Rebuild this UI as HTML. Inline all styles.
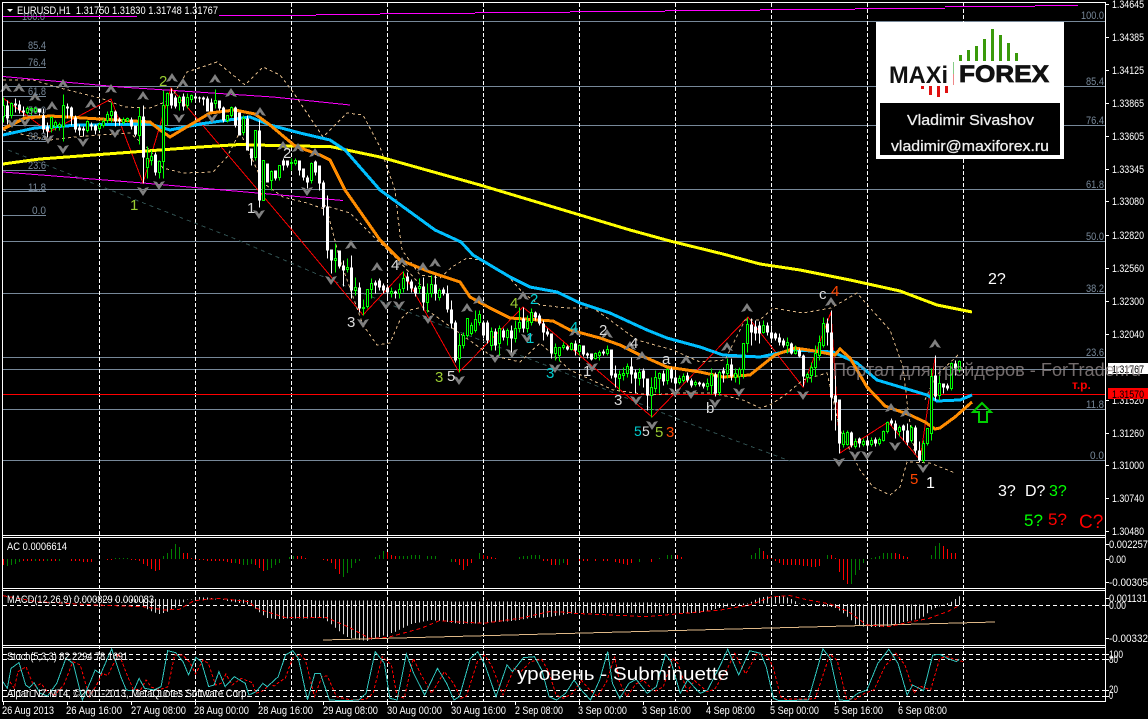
<!DOCTYPE html>
<html><head><meta charset="utf-8"><title>EURUSD,H1</title>
<style>
html,body{margin:0;padding:0;background:#000;width:1148px;height:719px;overflow:hidden}
svg{display:block}
text{font-family:"Liberation Sans","Noto Sans CJK SC",sans-serif;white-space:pre}
.ax{font-size:11px;fill:#fff}
.fb{font-size:11px;fill:#778899}
.w{font-size:15px}
.n path{vector-effect:non-scaling-stroke}
</style></head><body>
<svg width="1148" height="719" viewBox="0 0 1148 719" xmlns="http://www.w3.org/2000/svg">
<defs>
<path id="u" d="M0-5 6 4 2 3 0 0-2 3-6 4Z" fill="#808080"/>
<path id="d" d="M0 5 6-4 2-3 0 0-2-3-6-4Z" fill="#808080"/>
<pattern id="st" x="3" y="0" width="4" height="10" patternUnits="userSpaceOnUse"><rect width="1" height="10" fill="#d8d8d8"/></pattern>
</defs>
<rect width="1148" height="719" fill="#000"/>

<!-- horizontal levels -->
<g shape-rendering="crispEdges">
<path stroke="#778899" fill="none" d="M3 21.5H1105M3 86.5H1105M3 125.5H1105M3 189.5H1105M3 241.5H1105M3 293.5H1105M3 357.5H1105M3 369.5H1105M3 409.5H1105M3 460.5H1105M3 50.5H46M3 67.5H46M3 96.5H46M3 115.5H46M3 141.5H46M3 170.5H46M3 191.5H46M3 215.5H46"/>
<path stroke="#fff" stroke-dasharray="4 2" fill="none" d="M99.5 3V701M195.5 3V701M291.5 3V701M387.5 3V701M483.5 3V701M579.5 3V701M675.5 3V701M771.5 3V701M867.5 3V701M963.5 3V701"/>
<path stroke="#f00" fill="none" d="M3 394.5H1105"/>
<path stroke="#f0f" fill="none" stroke-width="1" d="M3 16.5H137M219 15.5H316M316 14.5H380M380 13.5H475M475 12.5H570M570 11.5H665M665 10.5H760M760 9.5H855M855 8.5H945M945 6.5H1035M1035 5.5H1078"/>
<polyline fill="none" stroke="#f0f" points="3,76.5 120,87 273,97 350,105"/>
<polyline fill="none" stroke="#f0f" points="3,172 143,183 343,200.5"/>
<polyline fill="none" stroke="#2f4f4f" stroke-dasharray="4 4" points="8,150 233,238 291,263 331,280 423,318 553,368 680,420 790,461"/>
<polyline fill="none" stroke="#f00" points="3,98 49,132 111,99 143,183 171,88 292,230 363,315 403,272 459,372 523,307 652,417 748,317 803,387 831,312 840,453 888,422 920,460 935,358"/>
<!-- bands -->
<g fill="none" stroke="#deb887" stroke-dasharray="3 3">
<polyline points="3,80 33,80 60,88 100,98 125,107 150,108 170,100 187,72 217,62 233,75 245,85 263,67 280,75 293,92 323,137 347,113 363,115 380,147 395,190 400,235 402,250 420,275 440,278 452,267 467,258 480,260 507,275 523,293 540,305 567,308 593,308 610,320 637,340 673,350 700,362 725,360 745,320 760,320 773,308 803,313 831,308 857,293 870,308 890,330 903,367 908,410 915,455"/>
<polyline points="3,130 25,135 50,140 75,137 100,135 130,133 150,150 163,168 183,173 213,172 227,157 240,132 263,183 283,197 307,203 327,210 340,260 363,325 377,345 390,343 400,320 410,310 423,307 455,330 490,355 520,362 540,343 570,370 613,390 650,395 680,393 713,393 743,400 760,408 770,405 785,395 803,380 827,373 840,430 860,470 873,487 890,495 900,487 907,462 930,463 955,473"/>
<polyline points="323,205 350,213 377,240 400,262 425,290"/>
<polyline points="925,400 935,377 958,355"/>
</g>
<!-- moving averages -->
<g fill="none" stroke-width="3">
<polyline stroke="#ff0" points="3,164 25,161 40,159 120,153 200,147 240,144.5 290,146 330,146.5 380,157 480,185 570,212 630,230 670,241 723,254 760,264 800,270 850,280 900,291 937,305 972,312"/>
<polyline stroke="#00bfff" points="3,135 35,128 80,125 150,124 170,130 200,124 250,117 270,125 300,133 330,140 345,150 380,190 435,230 461,242 473,255 510,277 530,287 557,292 580,303 610,313 647,330 667,338 700,347 723,355 760,357 793,350 833,352 857,363 877,380 907,389 927,395 937,401 960,400 972,395"/>
<polyline stroke="#ff8c00" points="3,129 25,118 50,116 100,119 150,122 160,130 170,137 185,128 210,113 235,110 255,114 270,125 295,146 320,155 330,160 345,190 380,240 400,260 430,272 460,282 470,297 490,308 510,318 553,321 570,330 600,338 620,345 640,355 667,367 700,372 723,377 750,375 760,367 775,355 795,348 815,351 835,355 840,349 850,358 867,387 885,406 910,415 925,422 935,429 940,428 955,417 972,402"/>
</g>
</g>

<!-- fractal arrows -->
<g>
<use href="#u" x="6" y="88"/><use href="#u" x="19" y="88"/><use href="#u" x="35" y="97"/><use href="#u" x="52" y="106"/><use href="#u" x="63" y="84"/><use href="#u" x="91" y="104"/><use href="#u" x="111" y="89"/><use href="#u" x="143" y="96"/><use href="#u" x="172" y="78"/><use href="#u" x="183" y="83"/><use href="#u" x="215" y="79"/><use href="#u" x="231" y="93"/><use href="#u" x="260" y="112"/><use href="#u" x="283" y="146"/><use href="#u" x="298" y="148"/><use href="#u" x="315" y="153"/><use href="#u" x="351" y="245"/><use href="#u" x="377" y="267"/><use href="#u" x="402" y="262"/><use href="#u" x="423" y="267"/><use href="#u" x="435" y="263"/><use href="#u" x="479" y="300"/><use href="#u" x="467" y="308"/><use href="#u" x="523" y="296"/><use href="#u" x="575" y="332"/><use href="#u" x="607" y="334"/><use href="#u" x="630" y="346"/><use href="#u" x="642" y="356"/><use href="#u" x="686" y="360"/><use href="#u" x="727" y="347"/><use href="#u" x="747" y="308"/><use href="#u" x="831" y="302"/><use href="#u" x="935" y="344"/><use href="#u" x="891" y="408"/><use href="#u" x="906" y="413"/>
<use href="#d" x="12" y="123"/><use href="#d" x="25" y="122"/><use href="#d" x="48" y="139"/><use href="#d" x="63" y="149"/><use href="#d" x="83" y="142"/><use href="#d" x="115" y="133"/><use href="#d" x="143" y="191"/><use href="#d" x="159" y="185"/><use href="#d" x="179" y="118"/><use href="#d" x="212" y="118"/><use href="#d" x="259" y="214"/><use href="#d" x="307" y="191"/><use href="#d" x="331" y="280"/><use href="#d" x="363" y="323"/><use href="#d" x="386" y="305"/><use href="#d" x="399" y="305"/><use href="#d" x="428" y="319"/><use href="#d" x="459" y="380"/><use href="#d" x="495" y="358"/><use href="#d" x="512" y="353"/><use href="#d" x="527" y="338"/><use href="#d" x="555" y="368"/><use href="#d" x="592" y="367"/><use href="#d" x="636" y="400"/><use href="#d" x="652" y="425"/><use href="#d" x="675" y="392"/><use href="#d" x="691" y="394"/><use href="#d" x="715" y="403"/><use href="#d" x="739" y="392"/><use href="#d" x="803" y="395"/><use href="#d" x="839" y="462"/><use href="#d" x="855" y="455"/><use href="#d" x="867" y="455"/><use href="#d" x="895" y="446"/><use href="#d" x="923" y="468"/>
</g>

<!-- candles -->
<g shape-rendering="crispEdges" transform="translate(.5,.5)" fill="none">
<path stroke="#fff" d="M7 100V124M15 98V112M19 100V113M23 106V116M39 108V115M43 108V133M47 122V137M67 103V118M71 106V125M75 115V132M79 124V135M83 126V136M91 122V130M95 124V134M115 110V126M119 117V125M131 117V129M135 125V136M143 105V183M155 152V175M171 88V108M175 95V108M183 93V110M195 95V101M199 96V102M203 96V105M207 96V111M211 98V111M219 100V110M223 106V122M235 106V127M239 112V135M247 115V150M251 148V165M259 120V207M267 163V182M275 170V180M283 158V170M287 160V167M299 160V175M303 168V180M307 175V188M315 160V175M319 165V190M323 180V215M327 195V258M331 249V273M339 250V268M343 260V286M351 255V298M359 282V312M375 280V293M379 278V290M383 283V293M387 284V297M395 290V298M407 272V290M411 279V292M415 285V296M423 277V310M435 275V300M443 287V295M447 285V312M451 300V328M455 320V362M483 320V338M487 320V343M495 328V350M503 328V340M511 325V352M523 307V332M535 311V320M539 313V325M543 320V340M547 328V336M551 333V358M567 345V350M575 340V355M583 345V356M587 352V358M591 353V360M603 349V355M611 349V378M615 365V387M631 357V383M635 369V393M643 368V387M647 378V410M663 370V385M671 367V382M675 372V388M687 372V382M691 378V387M699 381V386M703 382V388M715 372V396M723 367V382M731 358V380M751 318V345M755 320V340M759 321V343M767 322V335M771 325V340M775 332V340M779 333V345M783 338V347M791 342V354M799 348V357M803 354V386M827 318V345M831 310V420M835 375V430M839 399V453M851 431V447M859 437V447M867 438V450M875 437V446M891 418V425M895 420V438M903 424V440M907 423V445M915 425V453M919 441V462M935 355V400M943 383V393M947 383V390M955 360V375"/>
<path stroke="#fff" stroke-width="3" d="M7 105V118M15 103V105M19 104V110M23 110V112M39 108V112M43 115V129M47 126V131M67 106V108M71 107V116M75 117V129M79 127V130M83 128V130M91 124V126M95 125V130M115 111V121M119 119V121M131 119V126M135 125V134M143 116V157M155 154V172M171 93V105M175 97V106M183 96V106M195 96V98M199 97V98M203 97V99M207 98V111M211 102V111M219 100V108M223 107V120M235 107V125M239 112V135M247 118V150M251 148V158M259 130V200M267 163V182M275 170V178M283 160V165M287 160V165M299 160V170M303 168V177M307 177V182M315 161V172M319 165V183M323 182V207M327 206V250M331 249V260M339 250V266M343 265V270M351 267V290M359 287V308M375 282V285M379 280V287M383 285V290M387 287V292M395 291V293M407 276V281M411 281V288M415 287V293M423 286V302M435 284V293M443 289V293M447 293V309M451 309V323M455 322V360M483 322V335M487 322V340M495 331V345M503 330V337M511 330V338M523 318V328M535 312V317M539 315V323M543 323V332M547 331V334M551 333V353M567 346V349M575 343V350M583 345V354M587 353V355M591 353V359M603 351V353M611 349V375M615 373V377M631 366V374M635 372V378M643 370V378M647 378V395M663 373V381M671 369V378M675 377V383M687 375V380M691 380V385M699 382V384M703 383V386M715 374V393M723 370V373M731 364V376M751 324V332M755 326V333M759 325V333M767 325V332M771 332V338M775 333V338M779 337V342M783 340V345M791 343V353M799 350V356M803 355V376M827 323V332M831 332V397M835 395V402M839 399V443M851 432V445M859 438V443M867 440V445M875 439V443M891 420V423M895 423V430M903 425V430M907 430V442M915 427V450M919 450V460M935 375V396M943 383V387M947 385V388M955 363V368"/>
<path stroke="#0f0" d="M3 97V122M11 102V118M27 106V114M31 107V115M35 106V113M51 116V132M55 120V130M59 122V130M63 94V141M87 120V132M99 122V130M103 118V127M107 111V123M111 102V122M123 117V124M127 117V122M139 107V144M147 146V178M151 150V165M159 160V178M163 90V178M167 92V125M179 95V110M187 93V108M191 94V102M215 89V108M227 115V122M231 106V117M243 115V135M255 130V160M263 160V200M271 170V190M279 165V180M291 158V170M295 158V165M311 162V183M335 243V272M347 258V272M355 277V295M363 299V315M367 289V308M371 278V298M391 287V297M399 283V298M403 271V292M419 278V293M427 283V312M431 275V297M439 288V300M459 333V372M463 332V348M467 318V337M471 322V335M475 310V332M479 310V325M491 327V350M499 325V355M507 328V345M515 320V342M519 307V332M527 315V332M531 308V325M555 343V360M559 347V361M563 342V349M571 342V350M579 344V355M595 352V359M599 350V360M607 345V355M619 370V390M623 367V380M627 363V377M639 368V385M651 377V417M655 370V392M659 372V393M667 368V384M679 375V384M683 373V382M695 380V386M707 378V390M711 368V394M719 370V395M727 358V378M735 368V382M739 367V384M743 343V378M747 317V352M763 320V333M787 337V353M795 345V354M807 372V382M811 362V382M815 345V376M819 335V360M823 317V347M843 430V447M847 430V445M855 438V448M863 438V446M871 437V446M879 437V445M883 430V441M887 421V433M899 425V436M911 425V442M923 440V462M927 428V445M931 368V440M939 375V400M951 362V390M959 360V372"/>
<path stroke="#0f0" fill="#000" d="M2 105h2v11h-2zM10 103h2v12h-2zM26 108h2v4h-2zM30 108h2v2h-2zM34 108h2v3h-2zM50 117h2v11h-2zM54 122h2v4h-2zM58 124h2v2h-2zM62 105h2v21h-2zM86 121h2v9h-2zM98 124h2v4h-2zM102 121h2v4h-2zM106 114h2v6h-2zM110 111h2v4h-2zM122 119h2v3h-2zM126 118h2v2h-2zM138 116h2v19h-2zM146 158h2v9h-2zM150 156h2v4h-2zM158 161h2v11h-2zM162 105h2v56h-2zM166 93h2v12h-2zM178 97h2v5h-2zM186 97h2v8h-2zM190 95h2v4h-2zM214 100h2v3h-2zM226 115h2v5h-2zM230 107h2v8h-2zM242 118h2v14h-2zM254 130h2v27h-2zM262 160h2v40h-2zM270 171h2v9h-2zM278 165h2v12h-2zM290 162h2v1h-2zM294 160h2v3h-2zM310 163h2v17h-2zM334 258h2v2h-2zM346 267h2v2h-2zM354 287h2v3h-2zM362 307h2v1h-2zM366 289h2v17h-2zM370 283h2v6h-2zM390 291h2v2h-2zM398 289h2v4h-2zM402 278h2v10h-2zM418 286h2v2h-2zM426 293h2v9h-2zM430 284h2v9h-2zM438 290h2v7h-2zM458 345h2v13h-2zM462 335h2v10h-2zM466 318h2v17h-2zM470 325h2v8h-2zM474 319h2v11h-2zM478 314h2v8h-2zM490 331h2v14h-2zM498 328h2v15h-2zM506 330h2v7h-2zM514 328h2v10h-2zM518 322h2v6h-2zM526 321h2v7h-2zM530 312h2v10h-2zM554 347h2v6h-2zM558 347h2v8h-2zM562 345h2v2h-2zM570 343h2v6h-2zM578 345h2v6h-2zM594 353h2v5h-2zM598 352h2v3h-2zM606 349h2v4h-2zM618 374h2v4h-2zM622 373h2v2h-2zM626 366h2v7h-2zM638 372h2v6h-2zM650 387h2v8h-2zM654 377h2v11h-2zM658 373h2v5h-2zM666 369h2v11h-2zM678 378h2v4h-2zM682 376h2v4h-2zM694 382h2v2h-2zM706 383h2v3h-2zM710 374h2v11h-2zM718 372h2v20h-2zM726 364h2v9h-2zM734 373h2v4h-2zM738 369h2v7h-2zM742 343h2v26h-2zM746 324h2v19h-2zM762 325h2v7h-2zM786 342h2v3h-2zM794 350h2v3h-2zM806 374h2v3h-2zM810 367h2v8h-2zM814 353h2v14h-2zM818 342h2v13h-2zM822 323h2v22h-2zM842 433h2v11h-2zM846 432h2v12h-2zM854 441h2v5h-2zM862 441h2v3h-2zM870 440h2v4h-2zM878 439h2v4h-2zM882 431h2v9h-2zM886 422h2v9h-2zM898 427h2v4h-2zM910 427h2v13h-2zM922 443h2v17h-2zM926 428h2v15h-2zM930 376h2v57h-2zM938 383h2v12h-2zM950 363h2v25h-2zM958 361h2v8h-2z"/>
</g>

<!-- AC -->
<g shape-rendering="crispEdges" transform="translate(.5,0)" fill="none">
<path stroke="#008000" d="M7 559V566M11 559V565M15 559V564M19 559V562M35 559V561M47 559V561M59 559V561M115 559V558M119 559V558M123 559V558M127 559V558M163 559V556M167 559V553M171 559V549M175 559V544M179 559V547M235 559V563M243 559V565M247 559V565M251 559V564M267 559V570M271 559V568M275 559V565M279 559V563M289 559V557M293 559V556M343 559V577M347 559V573M351 559V568M355 559V563M359 559V561M375 559V557M379 559V555M383 559V551M399 559V556M403 559V556M407 559V556M411 559V555M415 559V555M419 559V555M427 559V556M431 559V556M435 559V556M451 559V562M479 559V553M519 559V557M523 559V556M527 559V556M531 559V555M535 559V555M539 559V555M559 559V565M563 559V563M639 559V562M659 559V558M667 559V555M671 559V555M751 559V555M755 559V553M759 559V548M827 559V555M851 559V584M855 559V575M859 559V570M863 559V563M871 559V558M875 559V557M879 559V556M883 559V553M887 559V553M891 559V553M931 559V555M935 559V546M939 559V543"/>
<path stroke="#f00" d="M3 559V565M23 559V561M27 559V561M31 559V561M39 559V561M43 559V561M51 559V561M55 559V561M71 559V561M75 559V561M79 559V561M83 559V562M87 559V562M91 559V562M107 559V560M111 559V560M131 559V560M135 559V560M139 559V561M143 559V564M147 559V566M151 559V569M155 559V571M159 559V570M183 559V553M187 559V553M191 559V558M195 559V560M199 559V560M203 559V560M207 559V561M211 559V561M215 559V561M219 559V561M223 559V561M227 559V562M231 559V563M239 559V564M255 559V565M259 559V568M263 559V571M297 559V556M301 559V556M305 559V558M323 559V560M327 559V561M331 559V563M335 559V569M339 559V574M387 559V552M391 559V555M395 559V556M455 559V562M459 559V565M463 559V570M467 559V566M471 559V563M483 559V555M487 559V556M491 559V557M495 559V558M543 559V561M547 559V561M551 559V565M555 559V565M567 559V565M579 559V561M583 559V561M587 559V561M595 559V561M603 559V561M607 559V561M615 559V562M619 559V563M623 559V564M627 559V565M631 559V563M651 559V562M677 559V555M681 559V557M685 559V559M763 559V551M767 559V555M771 559V558M775 559V561M779 559V563M783 559V565M787 559V565M791 559V565M795 559V565M799 559V565M803 559V566M807 559V566M811 559V567M815 559V567M819 559V566M831 559V555M835 559V558M839 559V572M843 559V580M847 559V584M895 559V553M899 559V554M903 559V556M907 559V557M911 559V559M943 559V546M947 559V549M951 559V553M955 559V553"/>
</g>

<!-- MACD -->
<g shape-rendering="crispEdges">
<polygon fill="url(#st)" points="3,598 75,599 140,602 143,607 151,611 159,614 167,612 175,608 179,605 187,600 199,597 211,598 240,603 251,605 259,612 267,618 275,619 323,618 331,624 339,631 347,637 359,640 367,641 379,637 395,632 411,624 431,620 461,624 483,623 513,621 531,618 550,617 574,613 700,613 720,608 735,605 746,605 753,601 761,597 780,596 790,598 800,604 805,605 834,607 842,612 849,618 856,625 867,627 886,627 904,622 922,618 931,610 940,606 951,602 960,596 963,605"/>
<path stroke="#fff" stroke-dasharray="4 3" fill="none" d="M3 605.5H1105M3 654.5H1105M3 659.5H1105M3 690.5H1105M3 696.5H1105"/>
<line x1="323" y1="640" x2="995" y2="622" stroke="#deb887"/>
</g>
<g class="n" fill="none" stroke-dasharray="4 3" stroke="#f00" shape-rendering="crispEdges">
<path transform="translate(0,530) scale(.36607,.33333)" d="M8 197 100 215 260 225 390 230 450 240 490 238 530 212 600 205 680 215 700 235 780 263 890 262 950 290 1010 325 1060 322 1150 295 1200 272 1320 280 1420 265 1500 245 1568 248"/>
<path transform="translate(574,530) scale(.36607,.33333)" d="M0 250 100 255 200 260 300 250 400 240 480 225 540 200 590 197 640 210 700 222 750 245 800 285 860 290 900 280 970 265 1020 245 1050 228"/>
</g>

<!-- Stochastic -->
<g class="n" fill="none" shape-rendering="crispEdges">
<g stroke="#f00" stroke-dasharray="3 2">
<path transform="translate(7,530) scale(.36607,.33333)" d="M8 455 20 475 30 425 52 410 70 460 80 470 93 460 110 485 130 495 155 465 180 395 200 405 225 500 245 465 260 430 275 437 305 370 330 440 345 478 365 480 380 450 395 472 420 478 440 470 458 375 480 375 500 398 515 432 535 390 550 400 570 465 585 460 598 432 615 465 640 445 670 458 680 490 700 482 718 462 730 468 745 455 760 445 780 385 800 372 815 390 840 500 860 440 875 438 900 500 940 510 980 508 1000 490 1025 380 1050 405 1065 495 1085 505 1110 385 1130 432 1160 490 1195 425 1220 460 1240 505 1255 498 1285 395 1305 375 1325 410 1355 495 1385 415 1400 430 1430 395 1460 388 1480 425 1500 495 1520 505 1545 490 1568 455"/>
<path transform="translate(581,530) scale(.36607,.33333)" d="M0 450 20 475 45 500 70 455 92 380 105 455 125 500 150 462 170 450 200 485 225 470 250 385 265 400 290 485 310 452 345 485 365 478 400 415 420 370 450 432 480 372 510 378 525 412 545 500 560 508 640 506 680 372 700 392 725 505 750 508 775 490 800 480 830 410 860 370 885 405 910 490 925 468 955 480 980 385 1000 380 1020 388 1045 395"/>
</g>
<g stroke="#2fc4bc">
<path transform="translate(0,530) scale(.36607,.33333)" d="M8 455 20 475 30 415 52 398 70 465 80 473 93 458 110 490 130 498 155 460 180 385 200 400 225 510 245 460 260 420 275 432 305 357 330 440 345 480 365 483 380 445 395 475 420 480 440 470 458 362 480 368 500 395 515 435 535 382 550 395 570 470 585 465 598 425 615 470 640 440 670 460 680 495 700 485 718 460 730 470 745 455 760 440 780 375 800 362 815 385 840 510 860 430 875 430 900 510 940 512 980 510 1000 490 1025 365 1050 400 1065 505 1085 510 1110 372 1130 430 1160 495 1195 415 1220 460 1240 510 1255 500 1285 385 1305 365 1325 405 1355 500 1385 405 1400 425 1430 383 1460 380 1480 420 1500 500 1520 510 1545 490 1568 450"/>
<path transform="translate(574,530) scale(.36607,.33333)" d="M0 450 20 480 45 510 70 450 92 365 105 460 125 505 150 460 170 448 200 490 225 470 250 373 265 395 290 490 310 450 345 490 365 480 400 405 420 358 450 435 480 362 510 370 525 410 545 505 560 512 640 510 680 357 700 385 725 510 750 512 775 490 800 480 830 400 860 358 885 400 910 495 925 465 955 482 980 375 1000 373 1020 385 1045 395 1052 388"/>
</g>
</g>

<!-- frames -->
<g shape-rendering="crispEdges" fill="none" stroke="#fff">
<path d="M2.5 2.5H1105.5V701.5H2.5Z"/>
<path d="M2.5 535.5H1105.5M2.5 537.5H1105.5M2.5 588.5H1105.5M2.5 590.5H1105.5M2.5 645.5H1105.5M2.5 647.5H1105.5"/>
<path d="M1105 4.5h4M1105 37.5h4M1105 70.5h4M1105 103.5h4M1105 136.5h4M1105 169.5h4M1105 201.5h4M1105 235.5h4M1105 268.5h4M1105 301.5h4M1105 334.5h4M1105 400.5h4M1105 433.5h4M1105 465.5h4M1105 498.5h4M1105 531.5h4M1105 544.5h4M1105 559.5h4M1105 582.5h4M1105 598.5h4M1105 605.5h4M1105 638.5h4M1105 654.5h4M1105 659.5h4M1105 690.5h4M1105 696.5h4"/>
<path d="M3.5 701v4M67.5 701v4M131.5 701v4M195.5 701v4M259.5 701v4M323.5 701v4M387.5 701v4M451.5 701v4M515.5 701v4M579.5 701v4M643.5 701v4M707.5 701v4M771.5 701v4M835.5 701v4M899.5 701v4"/>
</g>

<!-- fib labels -->
<g class="fb">
<text x="22" y="20" textLength="23" lengthAdjust="spacingAndGlyphs">100.0</text>
<text x="28" y="49" textLength="18" lengthAdjust="spacingAndGlyphs">85.4</text>
<text x="28" y="66" textLength="18" lengthAdjust="spacingAndGlyphs">76.4</text>
<text x="28" y="95" textLength="18" lengthAdjust="spacingAndGlyphs">61.8</text>
<text x="28" y="114" textLength="18" lengthAdjust="spacingAndGlyphs">50.0</text>
<text x="28" y="140" textLength="18" lengthAdjust="spacingAndGlyphs">38.2</text>
<text x="28" y="169" textLength="18" lengthAdjust="spacingAndGlyphs">23.6</text>
<text x="28" y="191" textLength="18" lengthAdjust="spacingAndGlyphs">11.8</text>
<text x="32" y="214" textLength="14" lengthAdjust="spacingAndGlyphs">0.0</text>
<text x="1081" y="19" textLength="23" lengthAdjust="spacingAndGlyphs">100.0</text>
<text x="1086" y="85" textLength="18" lengthAdjust="spacingAndGlyphs">85.4</text>
<text x="1086" y="124" textLength="18" lengthAdjust="spacingAndGlyphs">76.4</text>
<text x="1086" y="188" textLength="18" lengthAdjust="spacingAndGlyphs">61.8</text>
<text x="1086" y="240" textLength="18" lengthAdjust="spacingAndGlyphs">50.0</text>
<text x="1086" y="292" textLength="18" lengthAdjust="spacingAndGlyphs">38.2</text>
<text x="1086" y="356" textLength="18" lengthAdjust="spacingAndGlyphs">23.6</text>
<text x="1086" y="408" textLength="18" lengthAdjust="spacingAndGlyphs">11.8</text>
<text x="1090" y="459" textLength="14" lengthAdjust="spacingAndGlyphs">0.0</text>
</g>

<!-- price axis -->
<g class="ax">
<text x="1112" y="8" textLength="32" lengthAdjust="spacingAndGlyphs">1.34645</text>
<text x="1112" y="41" textLength="32" lengthAdjust="spacingAndGlyphs">1.34385</text>
<text x="1112" y="74" textLength="32" lengthAdjust="spacingAndGlyphs">1.34125</text>
<text x="1112" y="107" textLength="32" lengthAdjust="spacingAndGlyphs">1.33865</text>
<text x="1112" y="140" textLength="32" lengthAdjust="spacingAndGlyphs">1.33605</text>
<text x="1112" y="173" textLength="32" lengthAdjust="spacingAndGlyphs">1.33345</text>
<text x="1112" y="205" textLength="32" lengthAdjust="spacingAndGlyphs">1.33080</text>
<text x="1112" y="239" textLength="32" lengthAdjust="spacingAndGlyphs">1.32820</text>
<text x="1112" y="272" textLength="32" lengthAdjust="spacingAndGlyphs">1.32560</text>
<text x="1112" y="305" textLength="32" lengthAdjust="spacingAndGlyphs">1.32300</text>
<text x="1112" y="338" textLength="32" lengthAdjust="spacingAndGlyphs">1.32040</text>
<text x="1112" y="404" textLength="32" lengthAdjust="spacingAndGlyphs">1.31520</text>
<text x="1112" y="437" textLength="32" lengthAdjust="spacingAndGlyphs">1.31260</text>
<text x="1112" y="469" textLength="32" lengthAdjust="spacingAndGlyphs">1.31000</text>
<text x="1112" y="502" textLength="32" lengthAdjust="spacingAndGlyphs">1.30740</text>
<text x="1112" y="535" textLength="32" lengthAdjust="spacingAndGlyphs">1.30480</text>
<text x="1109" y="548" textLength="39" lengthAdjust="spacingAndGlyphs">0.002257</text>
<text x="1109" y="563" textLength="17" lengthAdjust="spacingAndGlyphs">0.00</text>
<text x="1109" y="586" textLength="39" lengthAdjust="spacingAndGlyphs">-0.00305</text>
<text x="1109" y="602" textLength="38" lengthAdjust="spacingAndGlyphs">0.001131</text>
<text x="1109" y="609" textLength="17" lengthAdjust="spacingAndGlyphs">0.00</text>
<text x="1109" y="642" textLength="39" lengthAdjust="spacingAndGlyphs">-0.00332</text>
<text x="1109" y="658" textLength="14" lengthAdjust="spacingAndGlyphs">100</text>
<text x="1109" y="663" textLength="9" lengthAdjust="spacingAndGlyphs">80</text>
<text x="1109" y="693" textLength="9" lengthAdjust="spacingAndGlyphs">20</text>
<text x="1109" y="699" textLength="4" lengthAdjust="spacingAndGlyphs">0</text>
<!-- time axis -->
<text x="2" y="714" textLength="52" lengthAdjust="spacingAndGlyphs">26 Aug 2013</text>
<text x="66" y="714" textLength="56" lengthAdjust="spacingAndGlyphs">26 Aug 16:00</text>
<text x="131" y="714" textLength="55" lengthAdjust="spacingAndGlyphs">27 Aug 08:00</text>
<text x="194" y="714" textLength="55" lengthAdjust="spacingAndGlyphs">28 Aug 00:00</text>
<text x="258" y="714" textLength="55" lengthAdjust="spacingAndGlyphs">28 Aug 16:00</text>
<text x="323" y="714" textLength="55" lengthAdjust="spacingAndGlyphs">29 Aug 08:00</text>
<text x="387" y="714" textLength="55" lengthAdjust="spacingAndGlyphs">30 Aug 00:00</text>
<text x="451" y="714" textLength="55" lengthAdjust="spacingAndGlyphs">30 Aug 16:00</text>
<text x="515" y="714" textLength="48" lengthAdjust="spacingAndGlyphs">2 Sep 08:00</text>
<text x="578" y="714" textLength="49" lengthAdjust="spacingAndGlyphs">3 Sep 00:00</text>
<text x="642" y="714" textLength="49" lengthAdjust="spacingAndGlyphs">3 Sep 16:00</text>
<text x="706" y="714" textLength="49" lengthAdjust="spacingAndGlyphs">4 Sep 08:00</text>
<text x="770" y="714" textLength="49" lengthAdjust="spacingAndGlyphs">5 Sep 00:00</text>
<text x="834" y="714" textLength="49" lengthAdjust="spacingAndGlyphs">5 Sep 16:00</text>
<text x="898" y="714" textLength="49" lengthAdjust="spacingAndGlyphs">6 Sep 08:00</text>
<!-- headers -->
<text x="7" y="550" textLength="60" lengthAdjust="spacingAndGlyphs">AC 0.0006614</text>
<text x="7" y="603" textLength="147" lengthAdjust="spacingAndGlyphs">MACD(12,26,9) 0.000829 0.000083</text>
<text x="7" y="660" textLength="121" lengthAdjust="spacingAndGlyphs">Stoch(5,3,3) 82.2294 78.1691</text>
<text x="7" y="697" textLength="242" lengthAdjust="spacingAndGlyphs">Alpari NZ MT4, ©2001-2013, MetaQuotes Software Corp.</text>
<text x="17" y="14" textLength="201" lengthAdjust="spacingAndGlyphs">EURUSD,H1  1.31750 1.31830 1.31748 1.31767</text>
</g>
<polygon points="7,9 13,9 10,12" fill="#fff"/>

<!-- wave labels -->
<g class="w">
<text x="159" y="86" fill="#9acd32">2</text>
<text x="130" y="210" fill="#9acd32">1</text>
<text x="247" y="213" fill="#dcdcdc">1</text>
<text x="283" y="158" fill="#dcdcdc">2</text>
<text x="347" y="327" fill="#dcdcdc">3</text>
<text x="391" y="270" fill="#dcdcdc">4</text>
<text x="435" y="382" fill="#9acd32">3</text>
<text x="447" y="381" fill="#dcdcdc">5</text>
<text x="510" y="308" fill="#9acd32">4</text>
<text x="530" y="304" fill="#00ced1">2</text>
<text x="526" y="343" fill="#00ced1">1</text>
<text x="570" y="332" fill="#00ced1">4</text>
<text x="546" y="378" fill="#00ced1">3</text>
<text x="599" y="335" fill="#dcdcdc">2</text>
<text x="583" y="376" fill="#dcdcdc">1</text>
<text x="630" y="348" fill="#dcdcdc">4</text>
<text x="614" y="405" fill="#dcdcdc">3</text>
<text x="662" y="364" fill="#dcdcdc">a</text>
<text x="706" y="413" fill="#dcdcdc">b</text>
<text x="634" y="436" fill="#00ced1" style="font-size:14px">5</text>
<text x="642" y="436" fill="#dcdcdc" style="font-size:14px">5</text>
<text x="655" y="437" fill="#9acd32">5</text>
<text x="666" y="437" fill="#ff4500">3</text>
<text x="819" y="299" fill="#dcdcdc">c</text>
<text x="831" y="296" fill="#ff4500">4</text>
<text x="910" y="484" fill="#ff4500">5</text>
<text x="926" y="488" fill="#fff" style="font-size:16px">1</text>
<text x="988" y="284" fill="#fff" style="font-size:16px">2?</text>
<text x="998" y="496" fill="#fff" style="font-size:16px">3?</text>
<text x="1025" y="496" fill="#fff" style="font-size:16px">D?</text>
<text x="1049" y="496" fill="#0f0" style="font-size:16px">3?</text>
<text x="1024" y="526" fill="#0f0" style="font-size:17px">5?</text>
<text x="1048" y="525" fill="#f00" style="font-size:17px">5?</text>
<text x="1079" y="528" fill="#f00" style="font-size:19px">C?</text>
<text x="1072" y="389" fill="#f00" style="font-size:12px;font-weight:bold">т.р.</text>
</g>

<!-- green arrow -->
<path d="M982 403 973 412H979V422H987V412H991Z" fill="none" stroke="#00d000" stroke-width="2"/>

<!-- logo -->
<rect x="876" y="22" width="188" height="137" fill="#fff"/>
<rect x="880" y="103" width="180" height="52" fill="#000"/>
<g fill="#3a9a0a" shape-rendering="crispEdges"><rect x="959" y="55" width="3" height="6"/><rect x="967" y="50" width="3" height="11"/><rect x="975" y="46" width="3" height="15"/><rect x="983" y="39" width="3" height="22"/><rect x="991" y="29" width="3" height="32"/><rect x="999" y="35" width="3" height="26"/><rect x="1007" y="43" width="3" height="18"/><rect x="1015" y="53" width="3" height="8"/></g>
<g fill="#e01010" shape-rendering="crispEdges"><rect x="921" y="86" width="3" height="3"/><rect x="929" y="86" width="3" height="9"/><rect x="937" y="86" width="3" height="11"/><rect x="945" y="86" width="3" height="7"/></g>
<rect x="953" y="62" width="1" height="12" fill="#8c8"/><rect x="953" y="74" width="1" height="11" fill="#e88"/>
<text x="889" y="83" textLength="59" lengthAdjust="spacingAndGlyphs" style="font-size:24px;font-weight:bold" fill="#111">MAXi</text>
<text x="959" y="82" textLength="90" lengthAdjust="spacingAndGlyphs" style="font-size:24px;font-weight:bold;stroke:#111;stroke-width:.8" fill="#111">FOREX</text>
<text x="907" y="125" textLength="127" lengthAdjust="spacingAndGlyphs" style="font-size:15px;stroke:#eee;stroke-width:.3" fill="#eee">Vladimir Sivashov</text>
<text x="891" y="151" textLength="158" lengthAdjust="spacingAndGlyphs" style="font-size:15px;stroke:#eee;stroke-width:.3" fill="#eee">vladimir@maxiforex.ru</text>

<!-- price tags -->
<g shape-rendering="crispEdges">
<rect x="1108" y="363" width="40" height="11" fill="#fff"/>
<rect x="1108" y="388" width="40" height="11" fill="#f00"/>
</g>
<text x="1112" y="373" class="ax" style="fill:#000" textLength="32" lengthAdjust="spacingAndGlyphs">1.31767</text>
<text x="1112" y="398" class="ax" style="fill:#000" textLength="32" lengthAdjust="spacingAndGlyphs">1.31570</text>

<!-- overlays -->
<text x="833" y="376" textLength="308" lengthAdjust="spacingAndGlyphs" style="font-size:18px;fill:#9a9090;fill-opacity:.75">Портал для трейдеров - ForTrader.ru</text>
<text x="517" y="680" textLength="212" lengthAdjust="spacingAndGlyphs" style="font-size:18px;fill:#fff">уровень - Subminuette</text>
</svg>
</body></html>
